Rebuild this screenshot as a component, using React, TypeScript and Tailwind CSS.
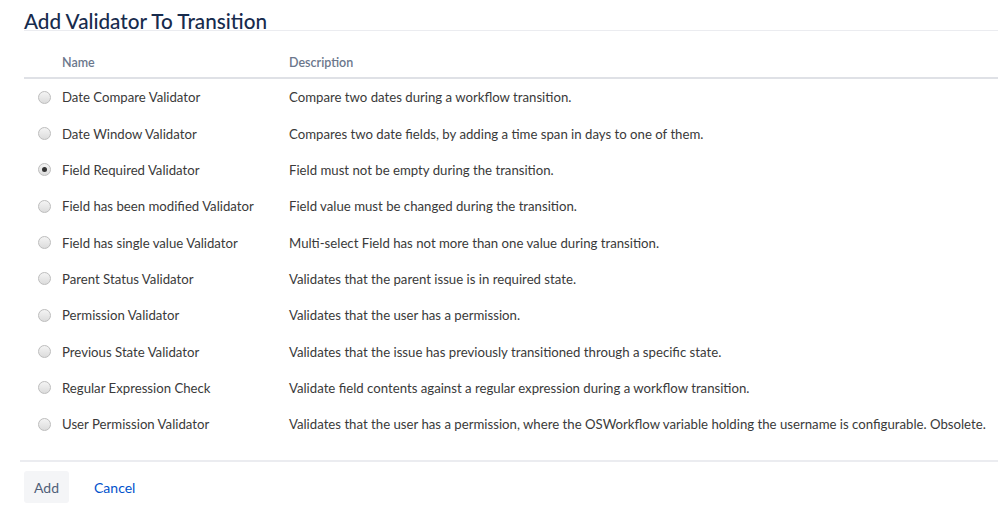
import React from "react";

const rows: [string, string, boolean][] = [
  ["Date Compare Validator", "Compare two dates during a workflow transition.", false],
  ["Date Window Validator", "Compares two date fields, by adding a time span in days to one of them.", false],
  ["Field Required Validator", "Field must not be empty during the transition.", true],
  ["Field has been modified Validator", "Field value must be changed during the transition.", false],
  ["Field has single value Validator", "Multi-select Field has not more than one value during transition.", false],
  ["Parent Status Validator", "Validates that the parent issue is in required state.", false],
  ["Permission Validator", "Validates that the user has a permission.", false],
  ["Previous State Validator", "Validates that the issue has previously transitioned through a specific state.", false],
  ["Regular Expression Check", "Validate field contents against a regular expression during a workflow transition.", false],
  ["User Permission Validator", "Validates that the user has a permission, where the OSWorkflow variable holding the username is configurable. Obsolete.", false],
];

function Radio({ checked }: { checked: boolean }) {
  return (
    <span className="flex h-[13px] w-[13px] items-center justify-center rounded-full border border-[#bdbdbd] bg-gradient-to-b from-[#f4f4f4] to-[#dcdcdc]">
      {checked && <span className="h-[5px] w-[5px] rounded-full bg-[#333]" />}
    </span>
  );
}

export default function App() {
  return (
    <div className="h-[514px] w-[998px] overflow-hidden bg-white pl-6 text-[13.2px] text-[#3a3a3a]" style={{ fontFamily: 'Lato, "Noto Sans", sans-serif' }}>
      <div className="flex h-[31px] items-end border-b border-[#ebecf0]">
        <h2 className="text-[20.7px] leading-[18px] font-medium text-[#172b4d]">Add Validator To Transition</h2>
      </div>
      <div className="flex h-[48px] items-end border-b-2 border-[#dfe1e6] pb-[4px] text-[12.5px] font-semibold text-[#6b778c]">
        <div className="w-[38px] shrink-0" />
        <div className="w-[227px] shrink-0">Name</div>
        <div>Description</div>
      </div>
      <div className="flex flex-col">
        {rows.map(([name, desc, checked]) => (
          <div key={name} className="flex h-[36.33px] items-center whitespace-nowrap">
            <div className="flex w-[38px] shrink-0 justify-start pl-[14px]">
              <Radio checked={checked} />
            </div>
            <div className="w-[227px] shrink-0 pt-[2px]">{name}</div>
            <div className="pt-[2px]">{desc}</div>
          </div>
        ))}
      </div>
      <div className="mt-[18px] -ml-[4px] border-t-2 border-[#ebecf0] pt-[9px] pl-[4px]">
        <div className="flex items-center gap-[25px]">
          <button className="h-[32px] rounded-[3px] bg-[#f4f5f7] px-[10px] text-[14px] text-[#505f79]">Add</button>
          <button className="text-[14px] text-[#0052cc]">Cancel</button>
        </div>
      </div>
    </div>
  );
}
